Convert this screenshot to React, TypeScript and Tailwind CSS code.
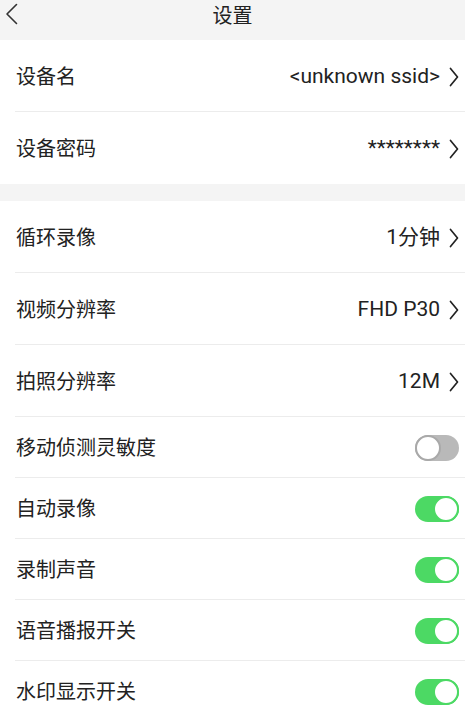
import React, { useState } from "react";

const font = { fontFamily: 'Roboto, "Noto Sans CJK SC", "Noto Sans", sans-serif' };

const Chevron = () => (
  <svg width="10" height="20" viewBox="0 0 10 20" className="ml-[9px] mr-[6px]">
    <path d="M1.5 1.5 L8.5 10 L1.5 18.5" fill="none" stroke="#222" strokeWidth="1.7" strokeLinecap="round" strokeLinejoin="round" />
  </svg>
);

const NavRow = ({ label, value, last }: { label: string; value: string; last?: boolean }) => (
  <div className="h-[72px] flex items-center pl-4 pt-[2px] relative">
    <span className="text-[20px] text-[#222] flex-1">{label}</span>
    <span className="text-[21px] text-[#222]">{value}</span>
    <Chevron />
    {!last && <div className="absolute left-[15px] right-0 bottom-0 h-px bg-[#ececec]" />}
  </div>
);

const Toggle = ({ on, onClick }: { on: boolean; onClick: () => void }) => (
  <button
    type="button"
    onClick={onClick}
    className={`relative w-[44px] h-[26px] rounded-full ${on ? "bg-[#4cd964]" : "bg-[#b9b9b9]"}`}
  >
    <span
      className={`absolute top-0 w-[26px] h-[26px] rounded-full bg-white border-2 ${
        on ? "left-[18px] border-[#4cd964]" : "left-0 border-[#a9a9a9]"
      }`}
    />
  </button>
);

const ToggleRow = ({ label, on, onClick }: { label: string; on: boolean; onClick: () => void }) => (
  <div className="h-[61px] flex items-center pl-4 pr-[6px] relative">
    <span className="text-[20px] text-[#222] flex-1">{label}</span>
    <Toggle on={on} onClick={onClick} />
    <div className="absolute left-[15px] right-0 bottom-0 h-px bg-[#ececec]" />
  </div>
);

export default function App() {
  const [toggles, setToggles] = useState([false, true, true, true, true]);
  const labels = ["移动侦测灵敏度", "自动录像", "录制声音", "语音播报开关", "水印显示开关"];

  const flip = (i: number) => setToggles((t) => t.map((v, j) => (j === i ? !v : v)));

  return (
    <div className="w-[465px] h-[718px] overflow-hidden bg-[#f4f4f4]" style={font}>
      <div className="h-[40px] flex items-center justify-center relative">
        <svg width="14" height="22" viewBox="0 0 14 22" className="absolute left-[5px] top-[3px]">
          <path d="M11.5 1.5 L2 11 L11.5 20.5" fill="none" stroke="#333" strokeWidth="1.6" strokeLinecap="round" strokeLinejoin="round" />
        </svg>
        <span className="text-[20px] text-[#222] -mt-[9px]">设置</span>
      </div>
      <div className="bg-white">
        <NavRow label="设备名" value="<unknown ssid>" />
        <NavRow label="设备密码" value="********" last />
      </div>
      <div className="h-[17px]" />
      <div className="bg-white">
        <NavRow label="循环录像" value="1分钟" />
        <NavRow label="视频分辨率" value="FHD P30" />
        <NavRow label="拍照分辨率" value="12M" />
        {labels.map((l, i) => (
          <ToggleRow key={l} label={l} on={toggles[i]} onClick={() => flip(i)} />
        ))}
      </div>
    </div>
  );
}
